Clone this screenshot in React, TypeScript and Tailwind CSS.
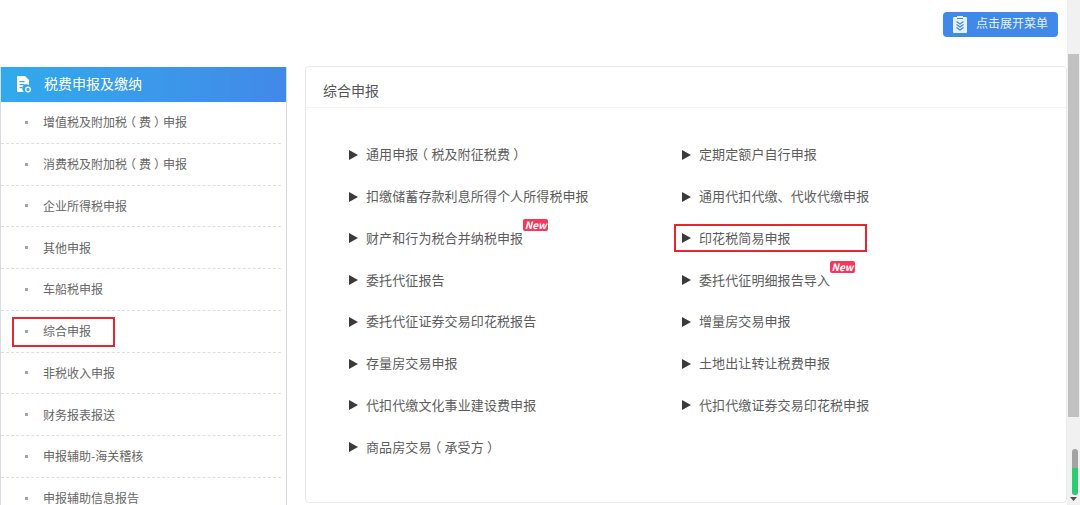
const sideItems = [
  '增值税及附加税（费）申报',
  '消费税及附加税（费）申报',
  '企业所得税申报',
  '其他申报',
  '车船税申报',
  '综合申报',
  '非税收入申报',
  '财务报表报送',
  '申报辅助-海关稽核',
  '申报辅助信息报告',
]

const mainItems = [
  { left: { name: '通用申报（税及附征税费）' }, right: { name: '定期定额户自行申报' } },
  { left: { name: '扣缴储蓄存款利息所得个人所得税申报' }, right: { name: '通用代扣代缴、代收代缴申报' } },
  { left: { name: '财产和行为税合并纳税申报', isNew: true }, right: { name: '印花税简易申报', marked: true } },
  { left: { name: '委托代征报告' }, right: { name: '委托代征明细报告导入', isNew: true } },
  { left: { name: '委托代征证券交易印花税报告' }, right: { name: '增量房交易申报' } },
  { left: { name: '存量房交易申报' }, right: { name: '土地出让转让税费申报' } },
  { left: { name: '代扣代缴文化事业建设费申报' }, right: { name: '代扣代缴证券交易印花税申报' } },
  { left: { name: '商品房交易（承受方）' } },
]

type Entry = { name: string; isNew?: boolean; marked?: boolean }

// the reference font centres full-width brackets in their cell
function Label({ text }: { text: string }) {
  const parts = text.split(/([（）])/)
  return (
    <>
      {parts.map((part, i) =>
        part === '（' || part === '）' ? (
          <span key={i} className="inline-block w-[1em] text-center [font-feature-settings:'halt']">
            {part}
          </span>
        ) : (
          <span key={i}>{part}</span>
        ),
      )}
    </>
  )
}

function MainEntry({ entry }: { entry: Entry }) {
  return (
    <div className="relative flex h-[41.75px] items-center">
      {entry.marked && (
        <div className="absolute left-[-8px] top-[7px] h-[28px] w-[193px] border-2 border-[#e8262f]" />
      )}
      <svg width="9" height="10" viewBox="0 0 9 10" className="mt-[2px] shrink-0">
        <polygon points="0,0 9,5 0,10" fill="#3a3a3a" />
      </svg>
      <span className="ml-[8px] text-[13px] leading-none tracking-[0.1px] text-[#5c5c5c]">
        <Label text={entry.name} />
      </span>
      {entry.isNew && (
        <span className="relative top-[-12px] flex h-[12px] w-[25px] items-center justify-center rounded-[2px] bg-[#f8365a] text-[10px] font-bold italic leading-none text-white">
          New
        </span>
      )}
    </div>
  )
}

export default function App() {
  return (
    <div className="flex h-[505px] w-[1080px] overflow-hidden bg-white font-['Noto_Sans_CJK_SC','Liberation_Sans',sans-serif]">
      <div className="w-[1067px] shrink-0">
        {/* Top bar */}
        <div className="flex h-[66px] items-start justify-end pr-[9px] pt-[12px]">
          <button className="flex h-[25px] w-[115px] items-center rounded-[4px] bg-[#4189e9] pl-[10px] text-white">
            <svg width="14" height="17" viewBox="0 0 14 17" className="shrink-0">
              <rect x="0" y="1" width="14" height="16" rx="1" fill="#e6effc" />
              <rect x="4" y="0" width="6" height="3" fill="#e6effc" />
              <rect x="4" y="2" width="6" height="1" fill="#4189e9" />
              <path d="M3.5 5.5 L7 8 L10.5 5.5 M3.5 8.5 L7 11 L10.5 8.5 M3.5 11.5 L7 14 L10.5 11.5" fill="none" stroke="#4189e9" strokeWidth="1.2" />
            </svg>
            <span className="mb-[3px] ml-[9px] text-[12px] leading-none text-[#e6effc]">点击展开菜单</span>
          </button>
        </div>

        <div className="flex items-start pl-[1px]">
          {/* Sidebar */}
          <div className="mt-[1px] h-[438px] w-[286px] shrink-0 border-r border-[#d9dbe2] shadow-[-1px_0_0_#d9dbe2]">
            <div className="flex h-[35px] items-center bg-gradient-to-r from-[#30aaec] to-[#4189e8] pl-[16px] text-white">
              <svg width="14" height="17" viewBox="0 0 14 17" className="shrink-0">
                <path d="M0 1 Q0 0 1 0 L8 0 L12 4 L12 9 A4 4 0 0 0 7 16 L1 16 Q0 16 0 15 Z" fill="#fff" />
                <rect x="2.5" y="5" width="5" height="1.2" fill="#30aaec" />
                <rect x="2.5" y="8" width="5" height="1.2" fill="#30aaec" />
                <rect x="2.5" y="11" width="3" height="1.2" fill="#30aaec" />
                <circle cx="11" cy="13.5" r="2.3" fill="none" stroke="#fff" strokeWidth="1.3" />
              </svg>
              <span className="mb-[3px] ml-[13px] text-[14px] leading-none">税费申报及缴纳</span>
            </div>
            {sideItems.map((item) => (
              <div
                key={item}
                className="relative mr-[5px] flex h-[41.75px] items-center border-b border-dashed border-[#dfdfdf] pl-[24px]"
              >
                {item === '综合申报' && (
                  <div className="absolute left-[11px] top-[6px] h-[30px] w-[103px] border-2 border-[#e8262f]" />
                )}
                <span className="h-[3px] w-[3px] shrink-0 bg-[#a5a5a5]" />
                <span className="ml-[15px] text-[12px] leading-none text-[#666]">
                  <Label text={item} />
                </span>
              </div>
            ))}
          </div>

          {/* Main panel */}
          <div className="ml-[18px] h-[437px] w-[762px] shrink-0 rounded-[4px] border border-[#e9e9e9]">
            <div className="flex h-[41px] items-center border-b border-[#f4f4f4] pl-[17px] pt-[6px]">
              <span className="text-[14px] leading-none text-[#555]">综合申报</span>
            </div>
            <div className="grid grid-cols-[333px_1fr] pl-[43px] pt-[25px]">
              {mainItems.map((row) => (
                <div key={row.left.name} className="contents">
                  <MainEntry entry={row.left} />
                  {row.right ? <MainEntry entry={row.right} /> : <div />}
                </div>
              ))}
            </div>
          </div>
        </div>
      </div>

      {/* Scrollbar */}
      <div className="relative w-[13px] shrink-0 bg-[#f1f1f1] pl-[1px] pt-[54px]">
        <div className="h-[363px] w-[11px] bg-[#c1c1c1]" />
        <div className="absolute left-[5px] top-[449px] h-[46px] w-[6px] overflow-hidden rounded-[3px] bg-[#a3a3a3]">
          <div className="mt-[19px] h-[27px] bg-[#2ecc71]" />
        </div>
        <svg width="7" height="4" viewBox="0 0 7 4" className="absolute left-[3px] top-[497px]">
          <polygon points="0,0 7,0 3.5,4" fill="#505050" />
        </svg>
      </div>
    </div>
  )
}
